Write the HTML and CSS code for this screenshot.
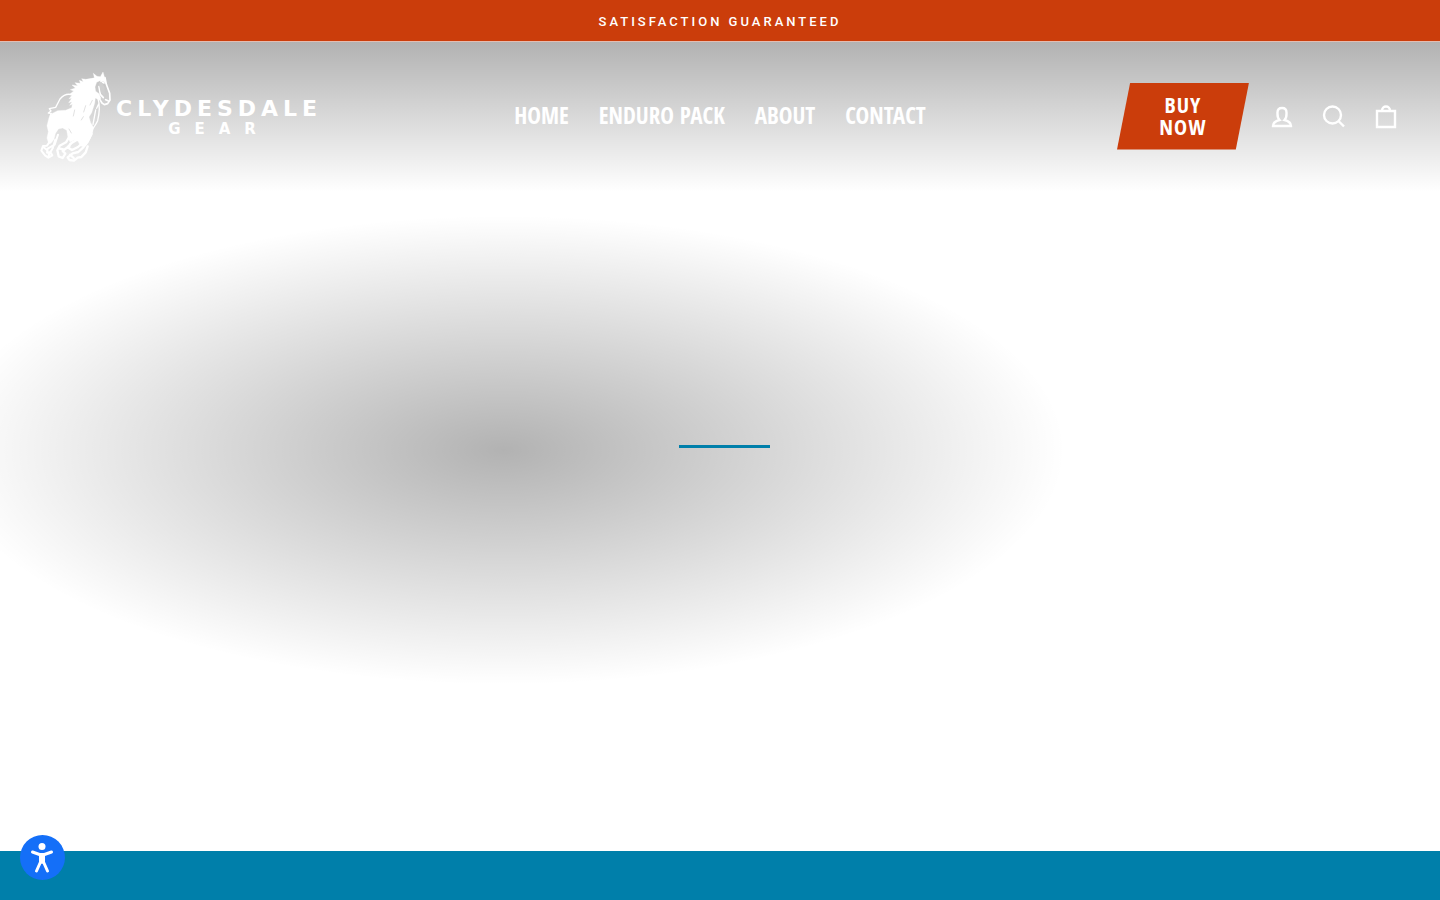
FILE: index.html
```html
<!DOCTYPE html>
<html lang="en">
<head>
  <meta charset="UTF-8">
  <meta name="viewport" content="width=device-width, initial-scale=1.0">
  <title>Clydesdale Gear</title>
  <link rel="stylesheet" href="styles.css">
</head>
<body>
  <div class="announcement">Satisfaction guaranteed</div>

  <main class="hero">
    <header class="site-header">
      <a class="logo" href="#" aria-label="Clydesdale Gear">
        <svg class="logo-horse" viewBox="30 30 216 276" fill="none" stroke="#fff" stroke-width="5" stroke-linecap="round" stroke-linejoin="round" aria-hidden="true">
          <!-- head, mane and neck -->
          <path fill="#fff" stroke-width="1" d="M193 53l-3-13 11 9 10 1 8-14 5 17 5 19-7-7-12-3-10 5-5 14 2 13 10 7 6 14-7 4-10-5-2 16-9 28-8 13 5 17 8 13-3 23-8 15-12 18-15 2-8-15-9-5-15 7-6-13-4-22-12-7-13 3-9 14-4 17-9 12-7 1-5-17 4-19-4-18 6-24 8-12 18-9 24-1 18-8 2-10-8 3 7-11-10 3 9-13-8 1 10-12-8-1 12-10-10-4 15-5-10-9 17 2-8-9 16 2-3-9 12 4-5-9 12 2z"/>
          <path d="M225 53l4 20 10 27 1 20-7 11-10 3-7-5-8-13M207 80l4 23 9 10M227 119l7 3M213 65l9 4"/>
          <!-- back and tail -->
          <path stroke-width="4" d="M142 112c-22-15-40-9-52 5l-13 25-19 4 5 7-8 6 9 1-4 9 9-2 2 11"/>
          <!-- chest -->
          <path stroke-width="4" d="M204 116c7 23 3 49-1 66-7 15-15 23-17 31M197 150l-8 43M207 130l-7 15"/>
          <!-- legs and hooves -->
          <path stroke-width="6" d="M71 212l-6 25-14 20-12 1-5 14 11 14 10 7 12-7-6-10-10 2 2-12 21-12 10-30M39 260l12 10M76 239l-8 26-12 21"/>
          <path stroke-width="7" d="M119 228l-11 19-19 10-7 14 4 18 12 5 8-13-8-8 14-11 16-16M90 266l13 3M145 237l-24 14-5 13 10 6 18-9 20-18M184 221l-11 24-13 17-15 14-17 4-15 12 5 8 14 2 11-9 11-2 13-14 6-18M120 284l11 10M166 220l6 24-12 14"/>
          <g stroke="#d2d2d2" stroke-width="2">
            <path d="M167 137l-6 19M134 150l-4 18M187 121l-7 14M117 207l7 12M160 170l-6 10"/>
          </g>
          <path fill="#cfcfcf" stroke="none" d="M206 68l9-2 8 15 2 24-12-5-3-13z"/>
        </svg>
        <span class="logo-text">
          <span class="logo-name">CLYDESDALE</span>
          <span class="logo-sub">GEAR</span>
        </span>
      </a>

      <nav class="site-nav" aria-label="Primary">
        <a href="#">Home</a>
        <a href="#">Enduro Pack</a>
        <a href="#">About</a>
        <a href="#">Contact</a>
      </nav>

      <div class="header-tools">
        <a class="buy-button" href="#">Buy Now</a>
        <a class="icon-link" href="#" aria-label="Log in">
          <svg viewBox="0 0 30 30"><path d="M12.500 19C10 16.500 10.500 13.500 10.500 11.500C10.500 8.500 12 7 15 7s4.500 1.500 4.500 4.500C19.500 13.500 20 16.500 17.500 19C21.500 20 24 21.500 24 25H6C6 21.500 8.500 20 12.500 19z"/></svg>
        </a>
        <button class="icon-link" type="button" aria-label="Search">
          <svg viewBox="0 0 30 30"><circle cx="13.500" cy="14" r="8.500"/><path d="M19.500 20l5.500 5.500"/></svg>
        </button>
        <a class="icon-link" href="#" aria-label="Cart">
          <svg viewBox="0 0 30 30"><path d="M6 10h18v16H6zM11 10c0-6 8-6 8 0"/></svg>
        </a>
      </div>
    </header>

    <div class="loader"><div class="loader-bar"></div></div>
  </main>

  <section class="blue-section"></section>

  <button class="accessibility-button" type="button" aria-label="Accessibility options">
    <svg viewBox="0 0 45 45" fill="none" stroke="#fff" stroke-width="3" stroke-linecap="round" stroke-linejoin="round">
      <circle cx="22" cy="11.500" r="3.500" fill="#fff" stroke="none"/>
      <path d="M12.500 17l7 2.500h5l7-2.500M20.500 20v7l-4 9M23.500 20v7l4 9"/>
      <path fill="#fff" stroke="none" d="M19 19h6v8l-3 2-3-2z"/>
    </svg>
  </button>
</body>
</html>
```
FILE: styles.css
```css
* {
  box-sizing: border-box;
}

body {
  margin: 0;
  min-height: 100vh;
  display: flex;
  flex-direction: column;
  font-family: Roboto, Arial, sans-serif;
  background-color: #fff;
}

a {
  color: inherit;
  text-decoration: none;
}

.announcement {
  padding: 12px 20px 9px;
  background-color: #cb3d0b;
  color: #fff;
  font-size: 13px;
  font-weight: 500;
  line-height: 20px;
  letter-spacing: 3px;
  text-align: center;
  text-transform: uppercase;
}

.hero {
  position: relative;
  flex: none;
  height: 90vh;
  display: flex;
  align-items: center;
  justify-content: center;
  background: radial-gradient(39% 29% at 35% 50.5%, rgba(0, 0, 0, 0.3), rgba(0, 0, 0, 0));
}

/* Header lies over the hero */
.site-header {
  position: absolute;
  top: 0;
  left: 0;
  right: 0;
  display: grid;
  grid-template-columns: 1fr auto 1fr;
  align-items: center;
  padding: 28px 40px 30px;
  border-top: 1px solid #e3bdb2;
  background: linear-gradient(rgba(0, 0, 0, 0.3), rgba(0, 0, 0, 0));
  color: #fff;
}

.logo {
  display: flex;
  align-items: center;
  gap: 4px;
}

.logo-horse {
  width: 72px;
  height: 92px;
}

.logo-text {
  display: flex;
  flex-direction: column;
  align-items: center;
  padding-top: 4px;
  font-family: "DejaVu Sans", sans-serif;
  font-weight: bold;
}

.logo-name {
  font-size: 22px;
  line-height: 22px;
  letter-spacing: 5px;
}

.logo-sub {
  font-size: 15px;
  line-height: 18px;
  letter-spacing: 14px;
}

.site-nav {
  display: flex;
  gap: 30px;
  padding-bottom: 2px;
  font-family: "Open Sans Condensed", "Liberation Sans Narrow", sans-serif;
  font-size: 23px;
  font-weight: bold;
  line-height: 30px;
  text-transform: uppercase;
}

.header-tools {
  display: flex;
  align-items: center;
  justify-content: flex-end;
  margin-right: -12px;
}

.buy-button {
  width: 132px;
  margin-right: 7px;
  padding: 10px 36px 13px;
  background-color: #cb3d0b;
  clip-path: polygon(10% 0, 100% 0, 90% 100%, 0 100%);
  font-family: "Open Sans Condensed", "Liberation Sans Narrow", sans-serif;
  font-size: 22px;
  font-weight: bold;
  line-height: 22px;
  letter-spacing: 1px;
  text-align: center;
  text-transform: uppercase;
}

.icon-link {
  padding: 0 11px;
  border: none;
  background: none;
  cursor: pointer;
}

.icon-link svg {
  display: block;
  width: 30px;
  height: 30px;
  fill: none;
  stroke: #fff;
  stroke-width: 2.4;
}

.loader {
  width: 100px;
}

.loader-bar {
  width: 91%;
  height: 3px;
  margin-left: auto;
  background-color: #007faa;
}

.blue-section {
  flex: 1;
  background-color: #007faa;
}

.accessibility-button {
  position: fixed;
  left: 20px;
  bottom: 20px;
  width: 45px;
  height: 45px;
  padding: 0;
  border: none;
  border-radius: 50%;
  background-color: #146ff8;
  cursor: pointer;
}

.accessibility-button svg {
  display: block;
}
```
